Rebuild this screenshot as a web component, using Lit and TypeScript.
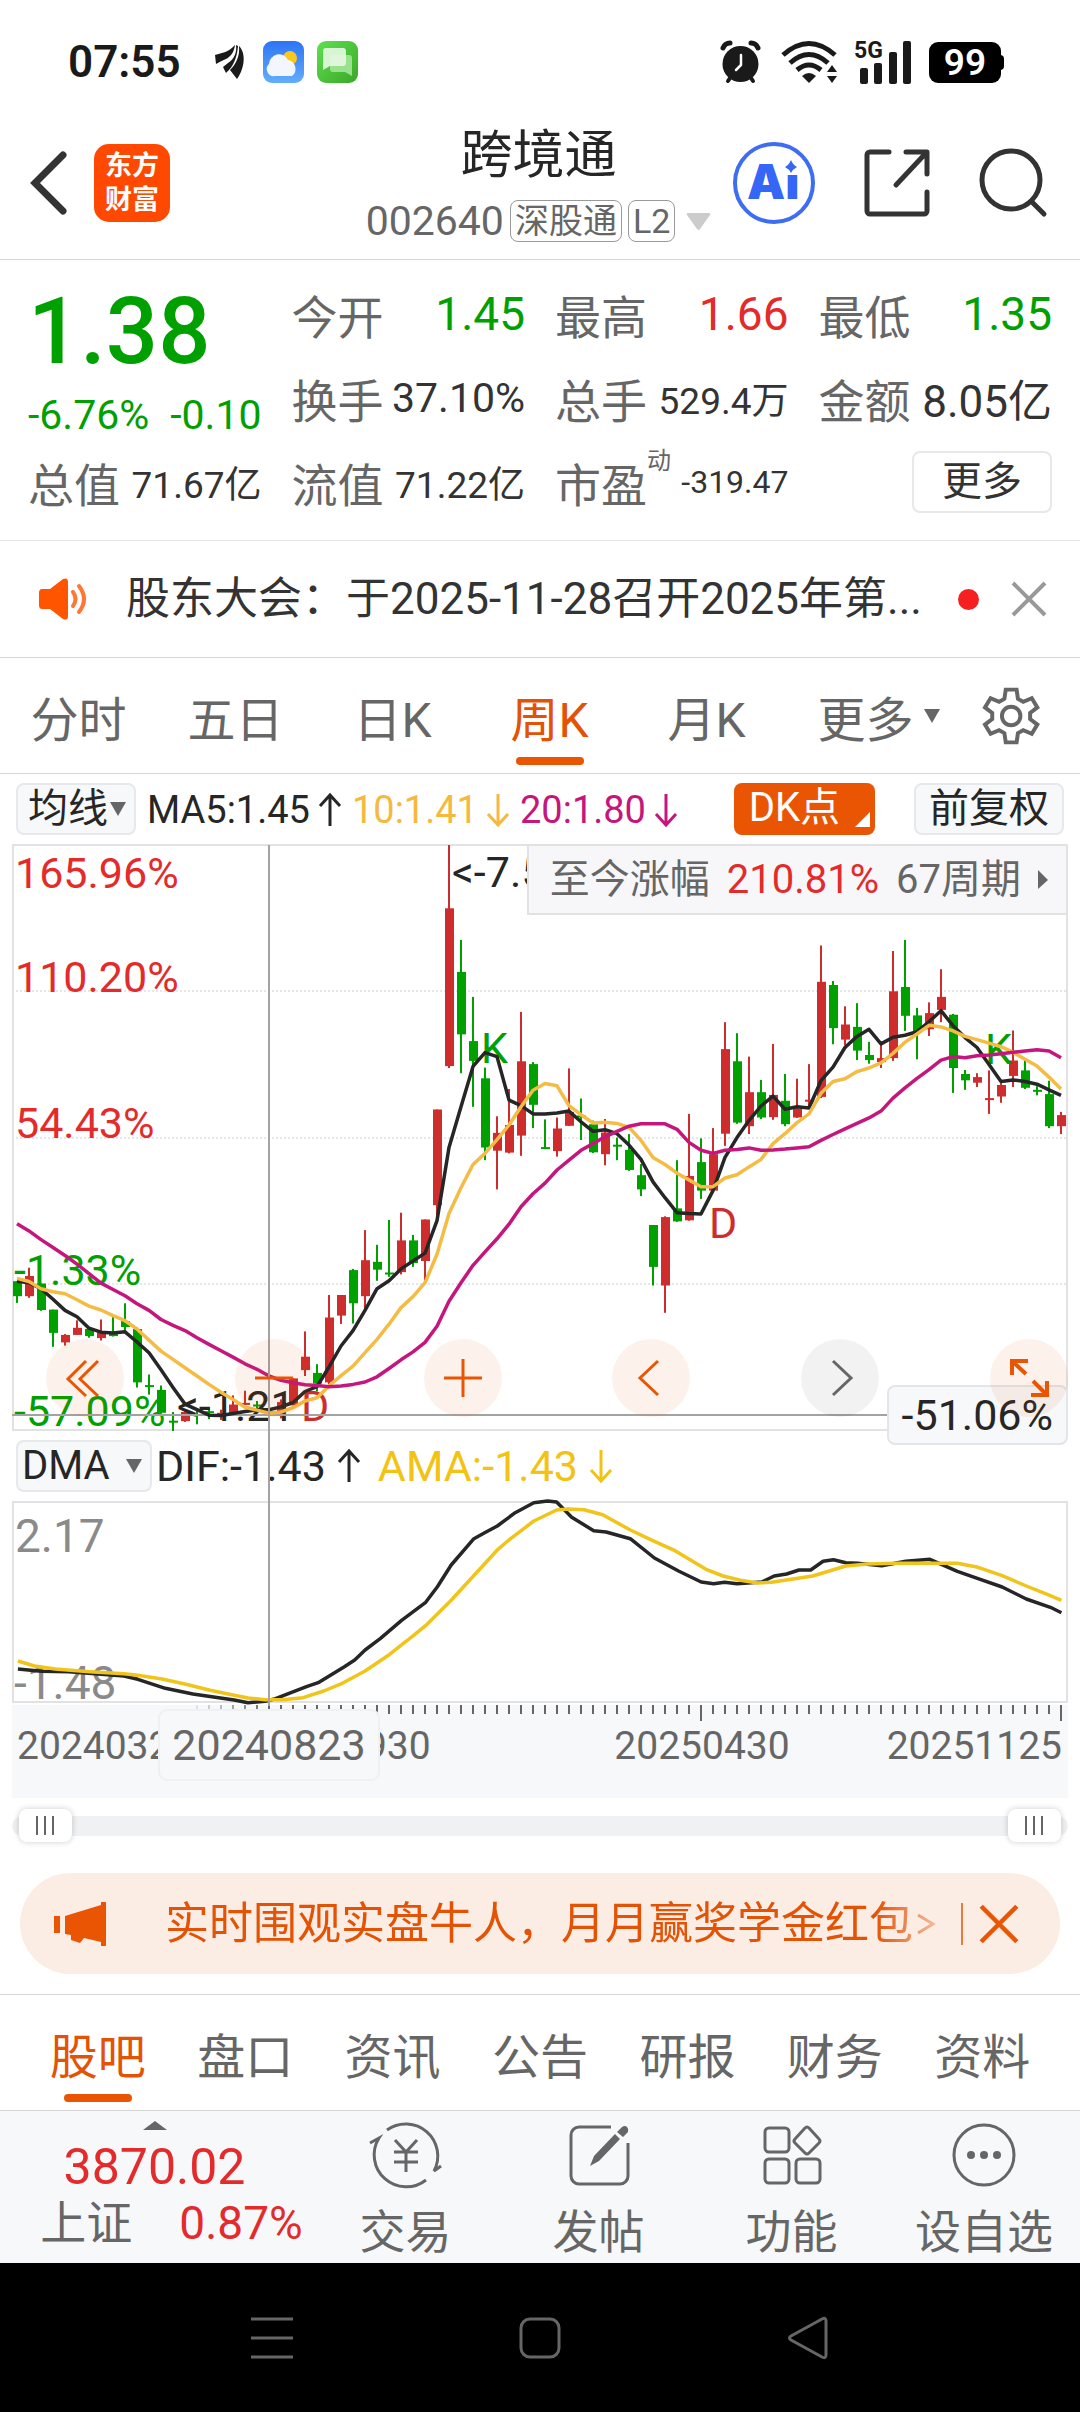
import { LitElement, html, svg, css } from "lit";
import { customElement, state } from "lit/decorators.js";
import { classMap } from "lit/directives/class-map.js";

type Side = "r" | "g";
/** side, high, body top, body bottom, low — in chart units counted downwards */
type Candle = [Side, number, number, number, number];

const CANDLES: Candle[] = [
  ["g", 1141, 1141, 1179, 1196], ["r", 1107, 1128, 1179, 1183], ["g", 1147, 1147, 1214, 1216],
  ["g", 1213, 1213, 1272, 1307], ["r", 1275, 1277, 1296, 1304], ["r", 1240, 1259, 1277, 1277],
  ["g", 1262, 1262, 1280, 1284], ["r", 1238, 1270, 1285, 1291], ["g", 1232, 1274, 1280, 1281],
  ["g", 1197, 1242, 1257, 1268], ["g", 1258, 1262, 1397, 1410], ["g", 1377, 1404, 1409, 1428],
  ["g", 1405, 1416, 1474, 1474], ["g", 1472, 1494, 1499, 1520], ["r", 1470, 1472, 1495, 1497],
  ["g", 1466, 1477, 1482, 1503], ["g", 1462, 1470, 1475, 1490], ["r", 1466, 1474, 1479, 1492],
  ["r", 1430, 1453, 1477, 1479], ["r", 1418, 1449, 1454, 1454], ["g", 1444, 1453, 1458, 1466],
  ["g", 1414, 1470, 1476, 1482], ["r", 1440, 1447, 1470, 1488], ["r", 1387, 1387, 1455, 1455],
  ["r", 1268, 1332, 1366, 1381], ["g", 1351, 1373, 1400, 1420], ["r", 1176, 1233, 1397, 1403],
  ["r", 1176, 1176, 1228, 1249], ["g", 1110, 1113, 1197, 1248], ["r", 1012, 1088, 1179, 1215],
  ["g", 1049, 1092, 1112, 1140], ["g", 986, 1119, 1124, 1130], ["r", 968, 1038, 1118, 1124],
  ["g", 1024, 1038, 1095, 1105], ["r", 985, 985, 1090, 1140], ["r", 707, 707, 949, 990],
  ["r", 38, 198, 597, 602], ["g", 278, 359, 517, 615], ["g", 422, 534, 584, 700],
  ["g", 601, 628, 803, 835], ["r", 724, 766, 811, 909], ["r", 655, 746, 816, 818],
  ["r", 460, 585, 773, 824], ["g", 587, 592, 695, 754], ["g", 732, 802, 807, 807],
  ["r", 727, 755, 812, 826], ["r", 603, 713, 748, 748], ["g", 679, 722, 727, 784],
  ["g", 735, 744, 815, 817], ["r", 731, 765, 820, 848], ["g", 778, 796, 801, 835],
  ["g", 769, 809, 860, 862], ["g", 845, 873, 909, 926], ["g", 999, 999, 1105, 1152],
  ["r", 977, 979, 1152, 1221], ["g", 835, 957, 990, 991], ["r", 718, 875, 987, 988],
  ["g", 780, 840, 912, 933], ["r", 754, 820, 912, 914], ["r", 486, 554, 768, 799],
  ["g", 514, 585, 740, 743], ["r", 573, 663, 749, 769], ["g", 632, 663, 727, 731],
  ["r", 541, 670, 726, 733], ["g", 617, 685, 744, 749], ["r", 629, 704, 727, 728],
  ["r", 592, 682, 687, 700], ["r", 292, 384, 675, 678], ["g", 382, 392, 501, 542],
  ["r", 446, 492, 530, 545], ["g", 438, 498, 558, 582], ["g", 536, 569, 582, 591],
  ["r", 534, 577, 587, 602], ["r", 306, 408, 577, 584], ["g", 278, 397, 470, 508],
  ["g", 450, 469, 512, 580], ["r", 436, 463, 504, 521], ["r", 352, 422, 455, 486],
  ["g", 465, 467, 602, 665], ["g", 607, 617, 633, 657], ["r", 615, 625, 639, 650],
  ["r", 608, 678, 683, 718], ["r", 640, 645, 674, 690], ["r", 507, 583, 622, 650],
  ["g", 582, 608, 652, 655], ["g", 648, 657, 662, 671], ["g", 634, 668, 749, 754],
  ["r", 713, 721, 749, 769],
];

const MA5 = [
  1141, 1145, 1160, 1187, 1215, 1231, 1260, 1270, 1272, 1269, 1295, 1322, 1365, 1410, 1452, 1466, 1480, 1481,
  1476, 1471, 1466, 1466, 1459, 1448, 1420, 1408, 1358, 1305, 1266, 1215, 1160, 1140, 1110, 1090, 1070, 988,
  803, 700, 598, 563, 573, 683, 697, 718, 718, 716, 711, 738, 762, 758, 768, 797, 833, 890, 930, 968, 970, 971,
  912, 828, 778, 735, 698, 673, 706, 700, 703, 634, 600, 550, 522, 504, 541, 524, 519, 510, 485, 457, 495, 525,
  550, 593, 636, 632, 636, 643, 657, 671,
];
const MA10 = [
  1134, 1142, 1160, 1168, 1173, 1188, 1204, 1214, 1228, 1241, 1262, 1290, 1318, 1339, 1360, 1381, 1402, 1422,
  1440, 1460, 1467, 1475, 1472, 1461, 1444, 1436, 1406, 1380, 1356, 1322, 1288, 1250, 1208, 1180, 1145, 1073,
  970, 905, 846, 818, 783, 746, 700, 658, 641, 647, 697, 720, 741, 739, 742, 752, 785, 828, 846, 868, 885, 902,
  902, 880, 872, 852, 833, 793, 768, 740, 718, 666, 636, 629, 611, 602, 589, 565, 537, 516, 494, 498, 508, 522,
  530, 539, 548, 562, 580, 597, 625, 655,
];
const MA20 = [
  996, 1014, 1036, 1056, 1076, 1098, 1122, 1146, 1162, 1178, 1198, 1215, 1238, 1253, 1266, 1284, 1301, 1317,
  1333, 1350, 1364, 1381, 1392, 1398, 1403, 1405, 1408, 1406, 1402, 1396, 1383, 1362, 1340, 1320, 1296, 1255,
  1192, 1145, 1101, 1067, 1034, 997, 953, 920, 893, 860, 835, 810, 793, 776, 762, 749, 743, 743, 743, 757, 790,
  810, 818, 810, 808, 804, 810, 809, 807, 804, 801, 785, 770, 756, 742, 728, 711, 678, 652, 628, 606, 582, 573,
  576, 571, 569, 566, 562, 559, 556, 559, 576,
];

type Pt = [number, number];
const DIF: Pt[] = [
  [26, 717], [60, 724], [100, 725], [180, 738], [200, 748], [240, 775], [280, 792], [340, 810], [360, 818],
  [385, 814], [400, 806], [445, 770], [462, 758], [500, 710], [515, 690], [530, 660], [552, 626], [583, 571],
  [600, 545], [618, 517], [635, 470], [655, 405], [688, 326], [705, 307], [722, 288], [748, 248], [775, 218],
  [795, 213], [808, 216], [830, 262], [862, 302], [880, 306], [915, 326], [950, 384], [985, 423], [1018, 456],
  [1036, 461], [1052, 457], [1070, 461], [1106, 456], [1124, 438], [1142, 432], [1160, 420], [1177, 420],
  [1195, 394], [1210, 389], [1228, 398], [1245, 400], [1280, 407], [1315, 394], [1350, 388], [1390, 424],
  [1420, 446], [1455, 471], [1490, 507], [1525, 532], [1541, 548],
];
const AMA: Pt[] = [
  [26, 693], [50, 708], [80, 717], [130, 725], [180, 731], [200, 736], [235, 747], [270, 763], [305, 781],
  [340, 796], [360, 804], [385, 809], [410, 809], [440, 803], [470, 783], [497, 760], [530, 723], [565, 674],
  [600, 617], [620, 583], [655, 511], [690, 432], [723, 358], [740, 328], [775, 273], [808, 240], [825, 237],
  [848, 239], [875, 254], [915, 300], [950, 334], [980, 362], [1000, 387], [1025, 418], [1050, 438],
  [1075, 451], [1100, 459], [1120, 457], [1180, 438], [1228, 408], [1260, 402], [1300, 400], [1390, 400],
  [1420, 412], [1455, 437], [1490, 468], [1525, 497], [1541, 511],
];

const STEP = 12;
const xAt = (i: number) => 5 + i * STEP;
const yAt = (u: number) => Math.round((u * 0.3954 - 14) * 10) / 10;
const maPoints = (vals: number[]) => vals.map((v, i) => `${xAt(i)},${yAt(v)}`).join(" ");
const dmaPoints = (pts: Pt[]) =>
  pts.map(([x, y]) => `${(x * 0.6888 - 12).toFixed(1)},${(y / 3 - 71).toFixed(1)}`).join(" ");

@customElement("kline-chart")
export class KlineChart extends LitElement {
  static styles = css`
    :host { display: block; }
    svg { display: block; width: 100%; overflow: visible; }
    text { font-family: Roboto, "Noto Sans CJK SC", sans-serif; font-size: 43px; }
    .frame { fill: none; stroke: #e2e2e4; stroke-width: 2; }
    .grid { stroke: #cfcfcf; stroke-width: 1; stroke-dasharray: 2 2; }
    .r { fill: #cd2d2d; }
    .g { fill: #00a000; }
    .line { fill: none; stroke-width: 3.5; stroke-linejoin: round; }
    .black { stroke: #262626; }
    .amber { stroke: #f5bc45; }
    .magenta { stroke: #c4167c; }
    .up { fill: #e32b2b; }
    .down { fill: #00a000; }
    .note { fill: #262626; }
    .cross { stroke: #a3a3a3; stroke-width: 2; }
  `;

  render() {
    return html`<svg viewBox="0 0 1056 587" role="img" aria-label="周K">
      ${[147, 294, 440].map((y) => svg`<line class="grid" x1="0" x2="1056" y1=${y} y2=${y}></line>`)}
      <rect class="frame" x="1" y="1" width="1054" height="585"></rect>
      ${CANDLES.map(([side, hi, top, bottom, lo], i) => svg`
        <rect class=${side} x=${xAt(i) - 1} width="2" y=${yAt(hi)} height=${yAt(lo) - yAt(hi)}></rect>
        <rect class=${side} x=${xAt(i) - 4} width="9" y=${yAt(top)} height=${Math.max(2, yAt(bottom) - yAt(top))}></rect>`)}
      <text class="up" x="3" y="44">165.96%</text>
      <text class="up" x="3" y="148">110.20%</text>
      <text class="up" x="3" y="294">54.43%</text>
      <text class="down" x="2" y="441">-1.33%</text>
      <text class="down" x="2" y="582">-57.09%</text>
      <text class="note" x="440" y="43">&lt;-7.53</text>
      <text class="down" x="469" y="219">K</text>
      <text class="down" x="973" y="220">K</text>
      <text class="r" x="697" y="394">D</text>
      <text class="r" x="289" y="577">D</text>
      <text class="note" x="165" y="577">&lt;-1.21</text>
      <line class="cross" x1="0" x2="1056" y1="571" y2="571"></line>
      <polyline class="line black" points=${maPoints(MA5)}></polyline>
      <polyline class="line amber" points=${maPoints(MA10)}></polyline>
      <polyline class="line magenta" points=${maPoints(MA20)}></polyline>
    </svg>`;
  }
}

@customElement("dma-chart")
export class DmaChart extends LitElement {
  static styles = css`
    :host { display: flex; flex-direction: column; gap: 2px; }
    svg { display: block; width: 100%; overflow: visible; }
    text { font-family: Roboto, "Noto Sans CJK SC", sans-serif; }
    .frame { fill: none; stroke: #e2e2e4; stroke-width: 2; }
    .line { fill: none; stroke-width: 3.5; stroke-linejoin: round; }
    .black { stroke: #262626; }
    .gold { stroke: #f0c419; }
    .limit { fill: #8a8a8a; font-size: 46px; }
    .band { fill: #f7f8fa; }
    .tick { stroke: #666; stroke-width: 2; }
    .date { fill: #666; font-size: 39px; }
    .picked { fill: #666; font-size: 43px; }
    .chip { fill: #f7f8fa; stroke: #eef0f2; stroke-width: 2; }
    .mid { text-anchor: middle; }
    .end { text-anchor: end; }
  `;

  render() {
    const ticks = Array.from({ length: 73 }, (_, k) => k + 15);
    return html`
      <svg viewBox="0 0 1056 202" role="img" aria-label="DMA">
        <rect class="frame" x="1" y="1" width="1054" height="200"></rect>
        <text class="limit" x="3" y="51">2.17</text>
        <text class="limit" x="2" y="198">-1.48</text>
        <polyline class="line black" points=${dmaPoints(DIF)}></polyline>
        <polyline class="line gold" points=${dmaPoints(AMA)}></polyline>
      </svg>
      <svg viewBox="0 0 1056 93" role="img" aria-label="日期">
        <rect class="band" width="1056" height="93"></rect>
        ${ticks.map((i) => svg`<line class="tick" x1=${xAt(i)} x2=${xAt(i)} y1="0"
          y2=${i % 30 === 27 ? 16 : 9} opacity=${Math.min(1, (i - 14) / 7)}></line>`)}
        <text class="date" x="5" y="54">20240329</text>
        <text class="date mid" x="331" y="54">20240930</text>
        <text class="date mid" x="690" y="54">20250430</text>
        <text class="date end" x="1050" y="54">20251125</text>
        <rect class="chip" x="147" y="5" width="220" height="70" rx="8"></rect>
        <text class="picked mid" x="257" y="55">20240823</text>
      </svg>`;
  }
}

const arrow = (dir: "up" | "down") => html`
  <svg class="arrow" viewBox="0 0 22 34" aria-hidden="true">
    <path d=${dir === "up" ? "M11 33V2M1 13L11 2l10 11" : "M11 1v31M1 21l10 11 10-11"}></path>
  </svg>`;

const caret = html`<svg class="caret" viewBox="0 0 16 14" aria-hidden="true"><path d="M0 0h16L8 14z"></path></svg>`;

@customElement("app-root")
export class AppRoot extends LitElement {
  @state() private period = "周K";
  @state() private section = "股吧";

  static styles = css`
    :host {
      display: block;
      background: #fff;
      color: #333;
      font-family: Roboto, "Noto Sans CJK SC", sans-serif;
      font-size: 40px;
    }
    * { box-sizing: border-box; }
    svg { display: block; flex: none; overflow: visible; }
    button, a {
      font: inherit; color: inherit; background: none; border: 0; padding: 0; margin: 0;
      text-decoration: none; white-space: nowrap; cursor: pointer;
    }
    .green { color: #00a000; }
    .red { color: #e32b2b; }

    .status { display: flex; align-items: center; justify-content: space-between; height: 124px; padding: 0 75px 0 68px; }
    .status-side { display: flex; align-items: center; }
    .clock { font-size: 44px; font-weight: 600; line-height: 52px; color: #1a1a1a; }
    .fan { width: 30px; height: 34px; margin: 0 18px 0 34px; }
    .app-icon { width: 41px; height: 42px; margin-right: 13px; }
    .alarm { width: 41px; height: 44px; margin-right: 20px; }
    .wifi { width: 58px; height: 42px; margin-right: 15px; }
    .signal { width: 58px; height: 43px; margin-right: 17px; }
    .net { font-size: 23px; font-weight: 700; fill: #1a1a1a; }
    .battery { width: 76px; height: 41px; }
    .charge { font-size: 37px; font-weight: 600; fill: #fff; text-anchor: middle; }

    .header {
      display: grid; grid-template-columns: 1fr auto 1fr; align-items: center;
      padding: 0 33px 17px 30px; border-bottom: 1px solid #d5d5d5;
    }
    .brand { display: flex; align-items: center; gap: 26px; }
    .back { width: 38px; height: 64px; }
    .logo {
      display: flex; align-items: center; justify-content: center; width: 76px; height: 78px;
      border-radius: 15px; background: #ff4800; color: #fff; font-size: 27px; font-weight: 700;
      line-height: 34px; text-align: center; white-space: normal;
    }
    .heading { display: flex; flex-direction: column; align-items: center; gap: 12px; }
    .title { margin: 0; font-size: 52px; font-weight: 400; line-height: 64px; color: #262626; }
    .code { display: flex; align-items: center; gap: 6px; color: #666; font-size: 41px; line-height: 42px; }
    .tag { padding: 0 4px; border: 1px solid #999; border-radius: 8px; font-size: 34px; line-height: 40px; }
    .code-caret { width: 25px; height: 17px; margin-left: 5px; fill: #ccc; }
    .tools { display: flex; align-items: center; justify-content: flex-end; gap: 49px; }
    .ai { width: 82px; height: 84px; }
    .ai-text { font-family: Inter, Roboto, sans-serif; font-size: 48px; font-weight: 900; fill: #3566f6; }
    .share { width: 66px; height: 68px; }
    .search { width: 68px; height: 70px; }

    .quotes {
      display: grid; grid-template-columns: repeat(4, 1fr); grid-auto-rows: 84px; column-gap: 30px;
      padding: 12px 28px 16px; border-bottom: 1px solid #e6e6e6;
    }
    .last { grid-row: span 2; display: flex; flex-direction: column; gap: 2px; padding-top: 4px; }
    .price { font-size: 92px; font-weight: 500; line-height: 112px; }
    .change { display: flex; justify-content: space-between; font-size: 41px; line-height: 50px; }
    .pair { display: flex; align-items: center; justify-content: space-between; white-space: nowrap; }
    .name { color: #666; font-size: 46px; }
    .sup { align-self: flex-start; margin: 5px auto 0 0; color: #666; font-size: 24px; line-height: 32px; }
    .v46 { font-size: 46px; }
    .v44 { font-size: 44px; }
    .v41 { font-size: 41px; }
    .v37 { font-size: 37px; }
    .v32 { font-size: 32px; }
    .more { display: flex; align-items: center; justify-content: flex-end; }
    .more-btn { width: 140px; height: 62px; border: 2px solid #e8e8ea; border-radius: 8px; font-size: 40px; line-height: 56px; }

    .notice { display: flex; align-items: center; height: 117px; padding: 0 34px 0 37px; border-bottom: 1px solid #d5d5d5; }
    .speaker { width: 52px; height: 42px; margin-right: 37px; }
    .notice-text { flex: 1; min-width: 0; overflow: hidden; white-space: nowrap; font-size: 44px; line-height: 60px; }
    .dot { width: 21px; height: 21px; margin-right: 33px; border-radius: 50%; background: #f62020; }
    .close { width: 34px; height: 36px; }

    .periods {
      display: grid; grid-template-columns: repeat(6, 157fr) 138fr; height: 116px; border-bottom: 1px solid #d5d5d5;
    }
    .tab {
      position: relative; flex: 1; display: flex; align-items: center; justify-content: center;
      color: #666; font-size: 48px;
    }
    .tab.on { color: #e35205; }
    .tab.on::after {
      content: ""; position: absolute; bottom: 8px; left: 50%; width: 68px; height: 8px; margin-left: -34px;
      border-radius: 4px; background: #ea5504;
    }
    .tab-more { gap: 10px; padding-left: 30px; }
    .caret { width: 16px; height: 14px; fill: #666; }
    .tab-gear { display: flex; align-items: center; justify-content: center; }
    .gear { width: 58px; height: 58px; }

    .indicators { display: flex; align-items: center; gap: 11px; padding: 8px 16px 9px; font-size: 38px; line-height: 50px; }
    .chip {
      display: flex; align-items: center; height: 52px; padding: 0 8px 0 10px; border: 2px solid #e6e8eb;
      border-radius: 8px; background: #f7f8fa; color: #262626; font-size: 40px; line-height: 52px;
    }
    .chip .caret { margin-left: 2px; }
    .chip-wide { padding: 0 13px; }
    .series { display: flex; align-items: center; gap: 9px; white-space: nowrap; }
    .indicators .series { padding-top: 3px; }
    .arrow { width: 22px; height: 34px; fill: none; stroke: currentColor; stroke-width: 3; }
    .ink { color: #262626; }
    .amber { color: #f5b93f; }
    .magenta { color: #c4167c; }
    .gold { color: #f2c314; }
    .dk {
      display: flex; align-items: flex-end; height: 52px; margin: 0 28px 0 auto; padding: 0 5px 0 15px; border-radius: 8px;
      background: #ea5504; color: #fff; font-size: 40px; line-height: 54px;
    }
    .corner { width: 15px; height: 15px; margin: 0 0 8px 15px; fill: #fff; }

    .charts { position: relative; margin: 0 12px; }
    .since {
      position: absolute; top: 0; right: 0; display: flex; align-items: center; gap: 17px; height: 71px;
      padding: 0 18px 0 21px; border: 2px solid #e2e2e4; background: #f7f7fa; color: #666; font-size: 40px; line-height: 56px;
    }
    .since-caret { width: 10px; height: 19px; fill: #666; }
    .pad { position: absolute; top: 495px; left: 34px; right: 0; display: flex; justify-content: space-between; }
    .round { width: 78px; height: 78px; border-radius: 50%; background: rgba(234, 85, 4, 0.08); }
    .round svg { width: 78px; height: 78px; fill: none; stroke: #ea5504; stroke-width: 3; }
    .round-off { background: rgba(0, 0, 0, 0.05); }
    .round-off svg { stroke: #666; }
    .level {
      position: absolute; top: 541px; right: 0; padding: 0 13px; border: 2px solid #e2e5ea; border-radius: 8px;
      background: #f7f8fa; color: #262626; font-size: 43px; line-height: 56px;
    }
    .dma { display: flex; align-items: center; gap: 18px; height: 70px; padding-left: 4px; font-size: 43px; }
    .dma .chip { width: 136px; justify-content: space-between; padding: 0 8px 0 4px; margin-right: -14px; }
    .dma .series { gap: 12px; }
    .dma .arrow { height: 38px; }
    .cross { position: absolute; top: 1px; bottom: 92px; left: 24.2%; width: 2px; background: #a3a3a3; }

    .range { position: relative; height: 33px; margin: 11px 12px 31px; padding: 7px 0; }
    .track { height: 20px; border-radius: 10px; background: #f0f1f3; }
    .thumb {
      position: absolute; top: 0; left: 7px; width: calc(100% - 14px); height: 33px; margin: 0;
      appearance: none; background: none; pointer-events: none;
    }
    .thumb::-webkit-slider-thumb {
      appearance: none; width: 53px; height: 33px; border-radius: 8px; pointer-events: auto;
      box-shadow: 0 0 6px rgba(0, 0, 0, 0.2);
      background:
        linear-gradient(#666, #666) 17px 7px / 2px 19px no-repeat,
        linear-gradient(#666, #666) 25px 7px / 2px 19px no-repeat,
        linear-gradient(#666, #666) 33px 7px / 2px 19px no-repeat,
        #fff;
    }

    .promo {
      display: flex; align-items: center; height: 101px; margin: 0 20px 20px; padding: 0 42px 0 33px;
      border-radius: 51px; background: #fcede4; color: #e35205;
    }
    .horn { width: 54px; height: 46px; margin-right: 58px; }
    .promo-text {
      flex: 1; min-width: 0; overflow: hidden; display: flex; align-items: center; gap: 3px; font-size: 44px; line-height: 64px;
      -webkit-mask-image: linear-gradient(90deg, #000 710px, transparent 800px);
      mask-image: linear-gradient(90deg, #000 710px, transparent 800px);
    }
    .chev { width: 20px; height: 36px; }
    .bar { width: 2px; height: 42px; margin-right: 17px; background: #ea7a40; }
    .promo .close { width: 38px; height: 40px; }

    .sections { display: flex; height: 116px; padding: 0 24px; border-top: 1px solid #d5d5d5; }

    .dock {
      display: grid; grid-template-columns: 309fr 193fr 193fr 193fr 192fr; height: 153px;
      border-top: 1px solid #d5d5d5; background: #f7f8fa; color: #666; font-size: 46px;
    }
    .index { display: flex; flex-direction: column; align-items: center; padding-top: 10px; }
    .up-caret { width: 24px; height: 9px; fill: #666; }
    .points { font-size: 50px; line-height: 56px; margin-top: 9px; }
    .market { display: flex; gap: 47px; line-height: 56px; padding-left: 34px; }
    .dock-item { display: flex; flex-direction: column; align-items: center; gap: 9px; padding-top: 8px; line-height: 64px; }
    .dock-icon { width: 74px; height: 72px; fill: none; stroke: #666; stroke-width: 3; }
    .solid { fill: #666; stroke: none; }

    .nav { display: grid; grid-template-columns: 1fr auto auto auto 1fr; align-items: center; height: 149px; background: #000; }
    .nav-btn { width: 268px; display: flex; justify-content: center; }
    .nav-btn svg { width: 44px; height: 44px; fill: none; stroke: #666; stroke-width: 3; }
  `;

  private tab(label: string, current: string, pick: (v: string) => void) {
    return html`<button class=${classMap({ tab: true, on: label === current })}
      aria-pressed=${label === current} @click=${() => pick(label)}>${label}</button>`;
  }

  private pair(name: string, value: string, size: string, tone = "") {
    return html`<div class="pair"><span class="name">${name}</span><span class="${size} ${tone}">${value}</span></div>`;
  }

  private statusBar() {
    return html`<div class="status">
      <div class="status-side">
        <span class="clock">07:55</span>
        <svg class="fan" viewBox="0 0 30 34" fill="#1a1a1a" aria-hidden="true">
          <path d="M0 10C7 8 14 7 20 0C19 8 15 12 11 14C7 16 4 17 1 19Z"></path>
          <path d="M21 0C22 8 19 14 13 18L8 22L11 28C18 22 22 13 23 1Z"></path>
          <path d="M24 1C25 11 21 19 15 25L22 34C28 26 32 11 25 2Z"></path>
        </svg>
        <svg class="app-icon" viewBox="0 0 41 42" aria-hidden="true">
          <defs><linearGradient id="sky" x1="0" y1="0" x2="0" y2="1">
            <stop offset="0" stop-color="#2d74f5"></stop><stop offset="1" stop-color="#62aefb"></stop>
          </linearGradient></defs>
          <rect width="41" height="42" rx="9" fill="url(#sky)"></rect>
          <circle cx="27" cy="17" r="7" fill="#fcc81c"></circle>
          <path d="M12 35a7 7 0 0 1-6-12a10 10 0 0 1 19-4a9 9 0 0 1 4 16z" fill="#f3f6fd"></path>
        </svg>
        <svg class="app-icon" viewBox="0 0 41 42" aria-hidden="true">
          <defs><linearGradient id="leaf" x1="0" y1="0" x2="1" y2="1">
            <stop offset="0" stop-color="#5ee04e"></stop><stop offset="1" stop-color="#3aa828"></stop>
          </linearGradient></defs>
          <rect width="41" height="42" rx="9" fill="url(#leaf)"></rect>
          <path d="M16 14h16a3 3 0 0 1 3 3v18l-7-4H16a3 3 0 0 1-3-3V17a3 3 0 0 1 3-3z" fill="#9be08f"></path>
          <path d="M9 7h17a3 3 0 0 1 3 3v12a3 3 0 0 1-3 3H13l-7 4V10a3 3 0 0 1 3-3z" fill="#e4f7e0" fill-opacity=".92"></path>
        </svg>
      </div>
      <div class="status-side">
        <svg class="alarm" viewBox="0 0 41 44" aria-hidden="true">
          <g fill="none" stroke="#1a1a1a" stroke-width="5" stroke-linecap="round">
            <path d="M3 8Q5 3 10 3M38 8Q36 3 31 3"></path><path d="M10 38L8 41M31 38L33 41" stroke-width="4"></path>
          </g>
          <circle cx="20.500" cy="24" r="18" fill="#1a1a1a"></circle>
          <path d="M21 15v10l-5 5" fill="none" stroke="#fff" stroke-width="2.500" stroke-linecap="round"></path>
        </svg>
        <svg class="wifi" viewBox="0 0 58 42" aria-hidden="true">
          <g fill="none" stroke="#1a1a1a" stroke-width="5">
            <path d="M2 14Q28-9 54 14"></path><path d="M9 22Q28 5 47 22"></path><path d="M16 29Q28 19 40 29"></path>
          </g>
          <path d="M21 35Q28 29 35 35L28 42Z" fill="#1a1a1a"></path>
          <path d="M46 31l5-7 5 7zM46 35l5 7 5-7z" fill="#1a1a1a"></path>
        </svg>
        <svg class="signal" viewBox="0 0 58 43" aria-hidden="true">
          <text class="net" x="0" y="17">5G</text>
          <g fill="#1a1a1a">
            <rect x="6" y="27" width="8" height="16" rx="2"></rect><rect x="20" y="22" width="8" height="21" rx="2"></rect>
            <rect x="35" y="11" width="8" height="32" rx="2"></rect><rect x="49" y="0" width="8" height="43" rx="2"></rect>
          </g>
        </svg>
        <svg class="battery" viewBox="0 0 76 41" aria-hidden="true">
          <rect width="72" height="41" rx="9"></rect><rect x="66" y="13" width="9" height="15" rx="4"></rect>
          <text class="charge" x="36" y="33">99</text>
        </svg>
      </div>
    </div>`;
  }

  private headerBar() {
    return html`<header class="header">
      <div class="brand">
        <button aria-label="返回"><svg class="back" viewBox="0 0 38 64" fill="none" stroke="#333" stroke-width="7" stroke-linecap="round">
          <path d="M33 4L5 32l28 28"></path></svg></button>
        <a class="logo" href="#">东方<br />财富</a>
      </div>
      <div class="heading">
        <h1 class="title">跨境通</h1>
        <div class="code"><span>002640</span><span class="tag">深股通</span><span class="tag">L2</span>
          <svg class="code-caret" viewBox="0 0 25 17" aria-hidden="true"><path d="M2 0h21q2 0 1 2L14 16q-1 2-3 0L1 2Q0 0 2 0z"></path></svg>
        </div>
      </div>
      <div class="tools">
        <button aria-label="Ai"><svg class="ai" viewBox="0 0 82 84">
          <circle cx="41" cy="42" r="39" fill="none" stroke="#3e6cf3" stroke-width="4"></circle>
          <text class="ai-text" x="14" y="58">Ai</text>
          <rect x="48" y="18" width="20" height="16" fill="#fff"></rect>
          <path d="M58 19q2 5 6 7q-4 2-6 6q-2-4-6-6q4-2 6-7z" fill="#3566f6"></path>
        </svg></button>
        <button aria-label="分享"><svg class="share" viewBox="0 0 66 68" fill="none" stroke="#333" stroke-width="5" stroke-linecap="round" stroke-linejoin="round">
          <path d="M25 3H6a3 3 0 0 0-3 3v56a3 3 0 0 0 3 3h54a3 3 0 0 0 3-3V43M42 3h21v22M62 4L32 36"></path></svg></button>
        <button aria-label="搜索"><svg class="search" viewBox="0 0 68 70" fill="none" stroke="#333" stroke-width="5" stroke-linecap="round">
          <circle cx="32" cy="32" r="29"></circle><path d="M53 54l12 12"></path></svg></button>
      </div>
    </header>`;
  }

  private quotes() {
    return html`<section class="quotes">
      <div class="last">
        <strong class="price green">1.38</strong>
        <div class="change green"><span>-6.76%</span><span>-0.10</span></div>
      </div>
      ${this.pair("今开", "1.45", "v46", "green")}
      ${this.pair("最高", "1.66", "v46", "red")}
      ${this.pair("最低", "1.35", "v46", "green")}
      ${this.pair("换手", "37.10%", "v41")}
      ${this.pair("总手", "529.4万", "v37")}
      ${this.pair("金额", "8.05亿", "v44")}
      ${this.pair("总值", "71.67亿", "v37")}
      ${this.pair("流值", "71.22亿", "v37")}
      <div class="pair"><span class="name">市盈</span><span class="sup">动</span><span class="v32">-319.47</span></div>
      <div class="more"><button class="more-btn">更多</button></div>
    </section>`;
  }

  private notice() {
    return html`<section class="notice">
      <svg class="speaker" viewBox="0 0 52 42" aria-hidden="true">
        <path d="M5 11h8L26 1q5-2 5 3v34q0 5-5 3L13 31H5q-3 0-3-4V15q0-4 3-4z" fill="#ff5500"></path>
        <path d="M36 14q5 7 0 14M42 8q10 13 0 26" fill="none" stroke="#ff7733" stroke-width="4" stroke-linecap="round"></path>
      </svg>
      <span class="notice-text">股东大会：于2025-11-28召开2025年第...</span>
      <span class="dot"></span>
      <button aria-label="关闭"><svg class="close" viewBox="0 0 34 36" fill="none" stroke="#999" stroke-width="4">
        <path d="M1 2l32 32M33 2L1 34"></path></svg></button>
    </section>`;
  }

  private chartArea() {
    return html`
      <div class="indicators">
        <button class="chip">均线${caret}</button>
        <span class="series ink">MA5:1.45${arrow("up")}</span>
        <span class="series amber">10:1.41${arrow("down")}</span>
        <span class="series magenta">20:1.80${arrow("down")}</span>
        <button class="dk">DK点<svg class="corner" viewBox="0 0 15 15" aria-hidden="true"><path d="M15 0v15H0z"></path></svg></button>
        <button class="chip chip-wide">前复权</button>
      </div>
      <section class="charts">
        <kline-chart></kline-chart>
        <div class="dma">
          <button class="chip">DMA${caret}</button>
          <span class="series ink">DIF:-1.43${arrow("up")}</span>
          <span class="series gold">AMA:-1.43${arrow("down")}</span>
        </div>
        <dma-chart></dma-chart>
        <div class="cross"></div>
        <button class="since"><span>至今涨幅</span><span class="red">210.81%</span><span>67周期</span>
          <svg class="since-caret" viewBox="0 0 10 19" aria-hidden="true"><path d="M0 0l10 10L0 19z"></path></svg></button>
        <output class="level">-51.06%</output>
        <div class="pad">
          <button class="round" aria-label="最早"><svg viewBox="0 0 78 78"><path d="M40 22L22 40l18 17M52 22L34 40l18 17"></path></svg></button>
          <button class="round" aria-label="缩小"><svg viewBox="0 0 78 78"><path d="M20 39h38"></path></svg></button>
          <button class="round" aria-label="放大"><svg viewBox="0 0 78 78"><path d="M20 39h38M39 20v38"></path></svg></button>
          <button class="round" aria-label="向前"><svg viewBox="0 0 78 78"><path d="M46 22L28 39l18 17"></path></svg></button>
          <button class="round round-off" aria-label="向后"><svg viewBox="0 0 78 78"><path d="M32 22l18 17-18 17"></path></svg></button>
          <button class="round" aria-label="全屏"><svg viewBox="0 0 78 78"><path d="M22 36V22h16M22 22l14 13M57 42v14H41M57 56L43 42" stroke-width="4"></path></svg></button>
        </div>
      </section>
      <div class="range">
        <div class="track"></div>
        <input class="thumb" type="range" min="0" max="100" value="0" aria-label="起点" />
        <input class="thumb" type="range" min="0" max="100" value="100" aria-label="终点" />
      </div>`;
  }

  private dock() {
    return html`<footer class="dock">
      <button class="index">
        <svg class="up-caret" viewBox="0 0 24 9" aria-hidden="true"><path d="M0 9L12 0l12 9z"></path></svg>
        <span class="points red">3870.02</span>
        <span class="market"><span>上证</span><span class="red">0.87%</span></span>
      </button>
      <button class="dock-item">
        <svg class="dock-icon" viewBox="-37 -36 74 72">
          <path d="M-19-25A32 32 0 0 1 28 16L35 11M20 25A32 32 0 0 1-27-17L-36-12"></path>
          <path d="M-11-15L0-3 11-15M-12-3h24M-12 7h24M0-3v20"></path>
        </svg><span>交易</span></button>
      <button class="dock-item">
        <svg class="dock-icon" viewBox="-6 -6 74 72">
          <path d="M43 2H11a8 8 0 0 0-8 8v41a8 8 0 0 0 8 8h41a8 8 0 0 0 8-8V18"></path>
          <path class="solid" d="M22 41L26 31 47 9l5 5L31 36zM49 7l5-5q3-2 5 0t1 5l-5 5z"></path>
        </svg><span>发帖</span></button>
      <button class="dock-item">
        <svg class="dock-icon" viewBox="-8 -7 74 72">
          <rect x="2" y="2" width="24" height="24" rx="4"></rect><rect x="2" y="33" width="24" height="24" rx="4"></rect>
          <rect x="33" y="33" width="24" height="24" rx="4"></rect>
          <path d="M42 2q2-2 4 0l10 11q2 2 0 4L46 27q-2 2-4 0L32 17q-2-2 0-4z"></path>
        </svg><span>功能</span></button>
      <button class="dock-item">
        <svg class="dock-icon" viewBox="-37 -36 74 72">
          <circle r="30"></circle><g class="solid"><circle cx="-13" r="4"></circle><circle r="4"></circle><circle cx="13" r="4"></circle></g>
        </svg><span>设自选</span></button>
    </footer>`;
  }

  render() {
    return html`
      ${this.statusBar()} ${this.headerBar()}
      <main>
        ${this.quotes()} ${this.notice()}
        <nav class="periods">
          ${["分时", "五日", "日K", "周K", "月K"].map((t) => this.tab(t, this.period, (v) => (this.period = v)))}
          <button class="tab tab-more">更多${caret}</button>
          <button class="tab-gear" aria-label="设置"><svg class="gear" viewBox="605 80 176 176" fill="none" stroke="#666" stroke-width="12">
            <path d="M677 88h33l4 28 16 9 26-11 17 28-22 17v18l22 17-17 28-26-11-16 9-4 28h-33l-4-28-16-9-26 11-17-28 22-17v-18l-22-17 17-28 26 11 16-9z"></path>
            <circle cx="693.500" cy="168" r="28"></circle></svg></button>
        </nav>
        ${this.chartArea()}
        <aside class="promo">
          <svg class="horn" viewBox="0 0 54 46" fill="#ea5504" aria-hidden="true">
            <path d="M1 15h6v17H1zM12 15L48 4V1h5v44h-5v-4l-17-4-4 5-9-3v-5l-6-1z"></path></svg>
          <span class="promo-text">实时围观实盘牛人，月月赢奖学金红包<svg class="chev" viewBox="0 0 20 36" fill="none" stroke="currentColor" stroke-width="3"><path d="M2 9l15 9L2 27"></path></svg></span>
          <span class="bar"></span>
          <button aria-label="关闭"><svg class="close" viewBox="0 0 34 36" fill="none" stroke="#ea5504" stroke-width="4">
            <path d="M1 2l32 32M33 2L1 34"></path></svg></button>
        </aside>
        <nav class="sections">
          ${["股吧", "盘口", "资讯", "公告", "研报", "财务", "资料"].map((t) => this.tab(t, this.section, (v) => (this.section = v)))}
        </nav>
      </main>
      ${this.dock()}
      <div class="nav">
        <span></span>
        <button class="nav-btn" aria-label="菜单"><svg viewBox="0 0 44 44"><path d="M1 3h42M1 22h42M1 41h42"></path></svg></button>
        <button class="nav-btn" aria-label="主页"><svg viewBox="0 0 44 44"><rect x="3" y="3" width="38" height="38" rx="9"></rect></svg></button>
        <button class="nav-btn" aria-label="后退"><svg viewBox="0 0 44 44"><path d="M36 3q4-2 4 2v34q0 4-4 2L5 24q-3-2 0-4z"></path></svg></button>
        <span></span>
      </div>`;
  }
}
